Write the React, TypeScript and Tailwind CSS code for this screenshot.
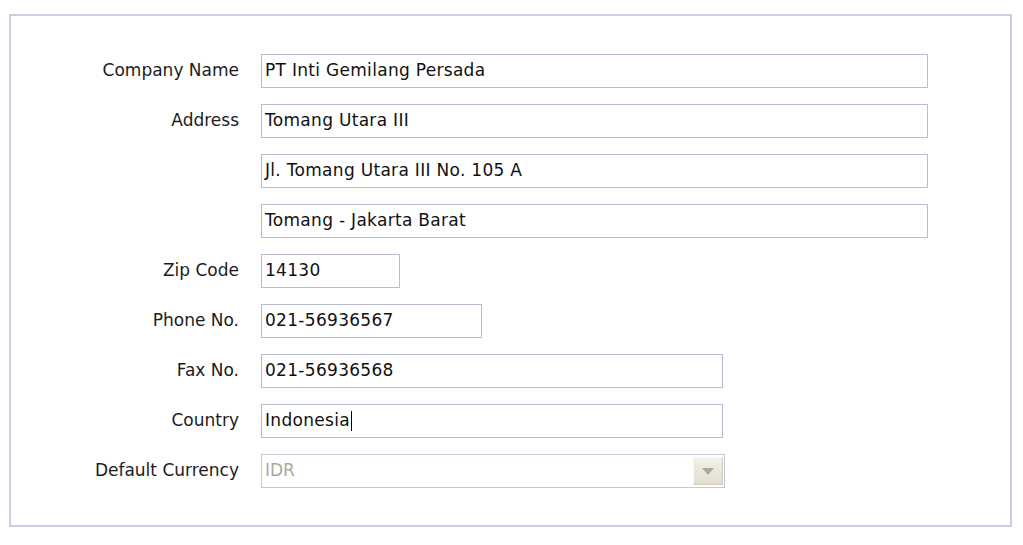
import React from "react";

const font = { fontFamily: '"DejaVu Sans", Verdana, sans-serif' };

function Row({ label, children }: { label: string; children: React.ReactNode }) {
  return (
    <div className="flex items-center h-[34px]">
      <div className="w-[229px] shrink-0 text-right text-[17px] text-[#1c1c1c] pr-[1px]">{label}</div>
      <div className="ml-[21px] flex">{children}</div>
    </div>
  );
}

function Input({ value, w, caret }: { value: string; w: string; caret?: boolean }) {
  return (
    <div className={`${w} h-[34px] border border-[#b7bdd3] bg-white flex items-center pl-[3px] text-[17px] tracking-[0.3px] text-[#111]`}>
      <span className="whitespace-pre">{value}</span>
      {caret && <span className="w-[1px] h-[20px] bg-black ml-[1px]" />}
    </div>
  );
}

export default function App() {
  return (
    <div className="w-[1023px] h-[545px] bg-white pt-[14px] pl-[9px]" style={font}>
      <div className="w-[1003px] h-[513px] border-2 border-[#c9cfe2] pt-[38px]">
        <div className="flex flex-col gap-[16px]">
          <Row label="Company Name"><Input value="PT Inti Gemilang Persada" w="w-[667px]" /></Row>
          <Row label="Address"><Input value="Tomang Utara III" w="w-[667px]" /></Row>
          <Row label=""><Input value="Jl. Tomang Utara III No. 105 A" w="w-[667px]" /></Row>
          <Row label=""><Input value="Tomang - Jakarta Barat" w="w-[667px]" /></Row>
          <Row label="Zip Code"><Input value="14130" w="w-[139px]" /></Row>
          <Row label="Phone No."><Input value="021-56936567" w="w-[221px]" /></Row>
          <Row label="Fax No."><Input value="021-56936568" w="w-[462px]" /></Row>
          <Row label="Country"><Input value="Indonesia" w="w-[462px]" caret /></Row>
          <Row label="Default Currency">
            <div className="w-[464px] h-[34px] border border-[#c3c8d8] bg-white flex items-center justify-between pl-[3px] pr-[1px] text-[17px] text-[#aca899]">
              <span>IDR</span>
              <div className="w-[30px] h-[28px] bg-gradient-to-b from-[#f3f1e8] to-[#e2dfd0] border border-[#f8f7f2] border-r-[#cfcbba] border-b-[#cfcbba] flex items-center justify-center">
                <svg width="12" height="7" viewBox="0 0 12 7"><path d="M0 0 H12 L6 7 Z" fill="#a9a7a0" /></svg>
              </div>
            </div>
          </Row>
        </div>
      </div>
    </div>
  );
}
